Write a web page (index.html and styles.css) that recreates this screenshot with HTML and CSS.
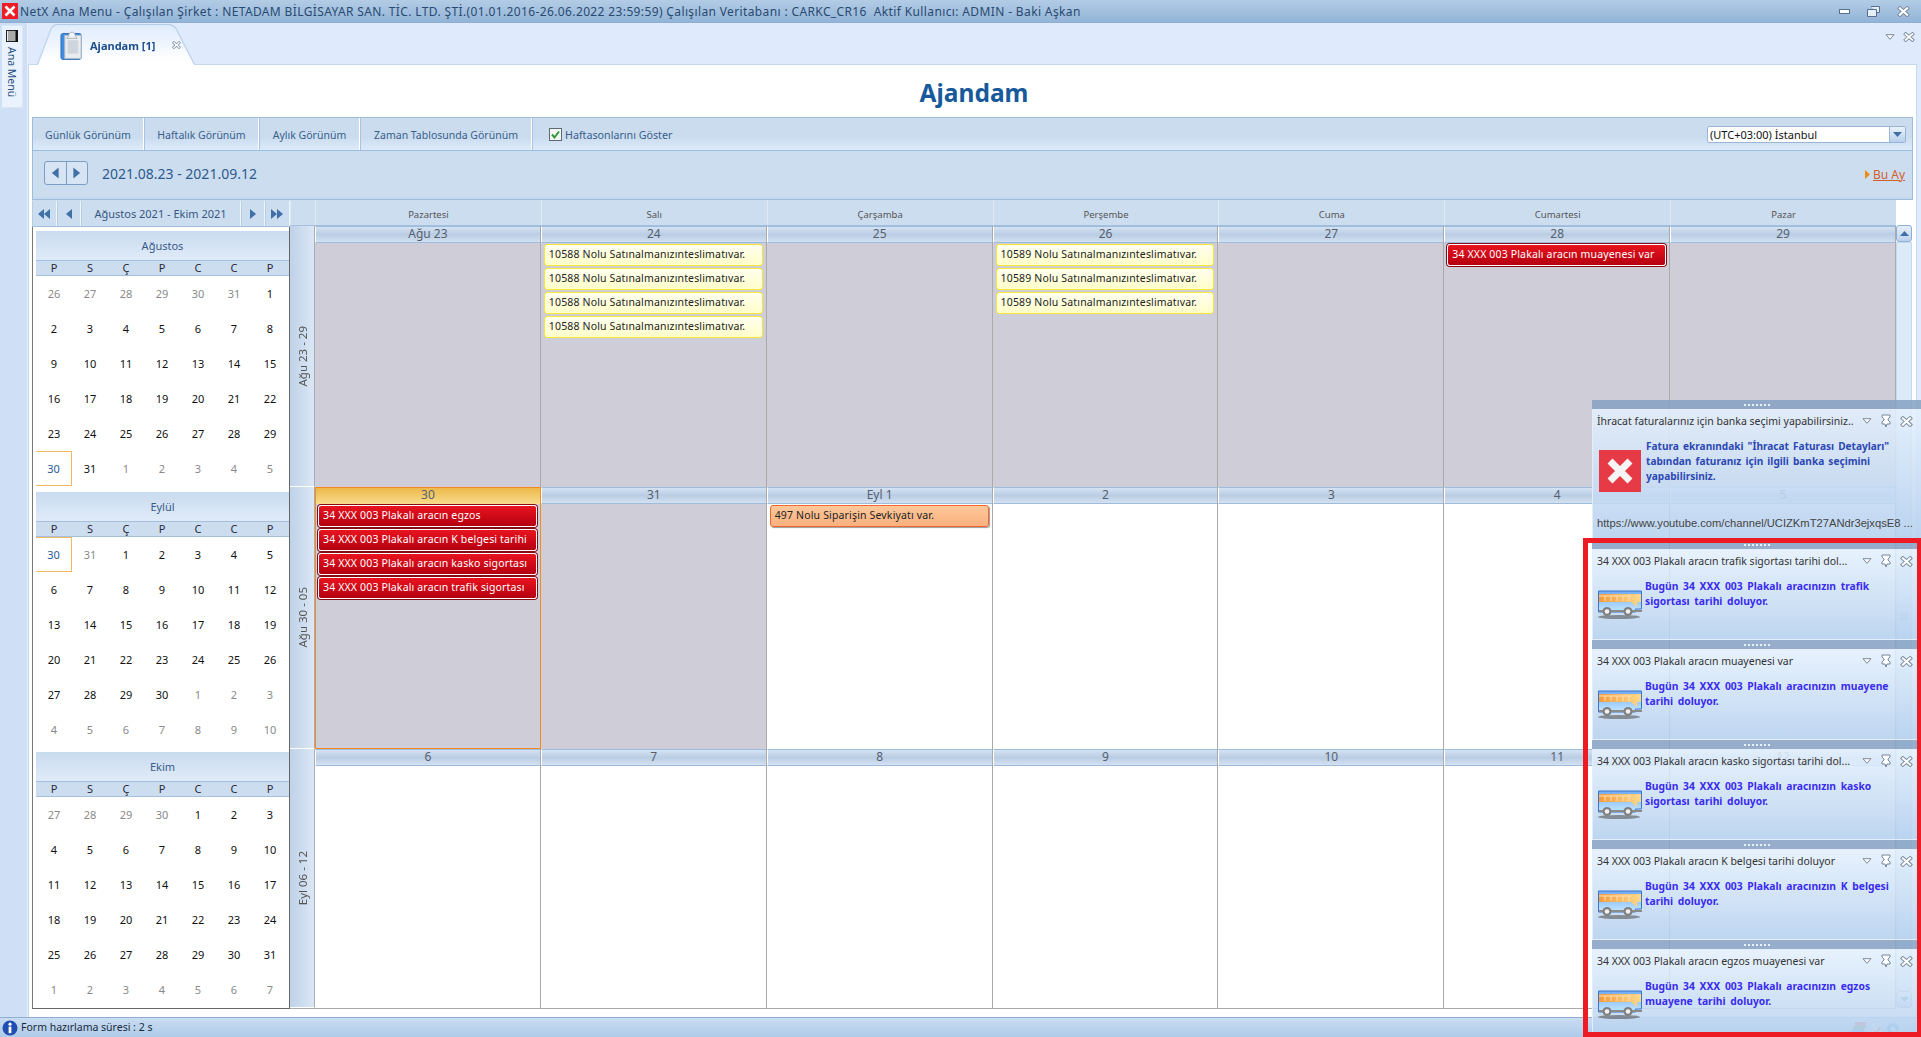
FILE: index.html
```html
<!DOCTYPE html>
<html lang="tr">
<head>
<meta charset="utf-8">
<title>NetX Ana Menu</title>
<link rel="stylesheet" href="styles.css">
</head>
<body>
<svg class="defs" width="0" height="0" aria-hidden="true">
  <defs>
    <linearGradient id="busBody" x1="0" y1="0" x2="0" y2="1"><stop offset="0" stop-color="#6faaf5"/><stop offset="1" stop-color="#c4e8ff"/></linearGradient>
    <linearGradient id="busWin" x1="0" y1="0" x2="1" y2="0"><stop offset="0" stop-color="#f59a3c"/><stop offset="1" stop-color="#fcd98a"/></linearGradient>
    <symbol id="bus" viewBox="0 0 44 30">
      <ellipse cx="21" cy="27" rx="21" ry="2" fill="#555" opacity=".6"/>
      <path d="M.5 1h43v18h-6v3H.5z" fill="url(#busBody)" stroke="#3f74c8"/>
      <path d="M1 4h42v8h-4v5l-6-5H1z" fill="url(#busWin)"/>
      <path d="M7 6v5M13 6v5M19 6v5M25 6v5M31 6v5M1 6h32" stroke="#ffe0b8" fill="none"/>
      <path d="M1 21h43" stroke="#8b8b8b" stroke-width="2"/>
      <circle cx="9" cy="21.5" r="4.5" fill="#808080"/><circle cx="9" cy="21.5" r="2.3" fill="#f2f2f2"/>
      <circle cx="30" cy="21.5" r="4.5" fill="#808080"/><circle cx="30" cy="21.5" r="2.3" fill="#f2f2f2"/>
    </symbol>
    <symbol id="xbox" viewBox="0 0 14 12"><path d="M3 2.5l8 7M11 2.5l-8 7" stroke="#76879a" stroke-width="4.2" stroke-linecap="square" fill="none"/><path d="M3 2.5l8 7M11 2.5l-8 7" stroke="#fff" stroke-width="2.2" stroke-linecap="square" fill="none"/></symbol>
    <symbol id="chev" viewBox="0 0 10 6"><path d="M1 .7h8L5 5.3z" fill="#fff" stroke="#6f7f90" stroke-width=".9"/></symbol>
    <symbol id="pin" viewBox="0 0 10 14"><path d="M1 1h8v2L7 5v1l2 2v2H6l-1 3-1-3H1V8l2-2V5L1 3z" fill="#fff" stroke="#76879a"/></symbol>
    <symbol id="lt" viewBox="0 0 10 14"><path d="M8.5 1v12L1 7z"/></symbol>
    <symbol id="rt" viewBox="0 0 10 14"><path d="M1.5 1v12L9 7z"/></symbol>
  </defs>
</svg>

<header class="titlebar">
  <svg class="appicon" viewBox="0 0 16 16"><rect width="16" height="16" fill="#ee1c25"/><path d="M3.5 3.5l9 9M12.5 3.5l-9 9" stroke="#fff" stroke-width="2.6"/></svg>
  <span class="apptitle">NetX Ana Menu - Çalışılan Şirket : NETADAM BİLGİSAYAR SAN. TİC. LTD. ŞTİ.(01.01.2016-26.06.2022 23:59:59) Çalışılan Veritabanı : CARKC_CR16&nbsp; Aktif Kullanıcı: ADMIN - Baki Aşkan</span>
  <span class="winbtns">
    <svg width="11" height="5" viewBox="0 0 11 5"><rect x=".5" y=".5" width="10" height="4" fill="#fff" stroke="#56708e"/></svg>
    <svg width="13" height="11" viewBox="0 0 13 11"><path d="M4 .5h8.5v6H10M.5 3.5h9v7h-9z" fill="#e6eef8" stroke="#56708e"/></svg>
    <svg width="13" height="11"><use href="#xbox"/></svg>
  </span>
</header>

<div class="app">
  <aside class="rail">
    <div class="railtab">
      <svg class="railicon" width="12" height="12" viewBox="0 0 12 12"><rect x=".5" y=".5" width="11" height="11" fill="#eee" stroke="#222"/><path d="M3 1v10M5 1v10M7 1v10M9 1v10" stroke="#666"/><rect x="9.5" y="0" width="2.5" height="12" fill="#111"/></svg>
      <span class="railtext">Ana Menü</span>
    </div>
  </aside>

  <main class="workspace">
    <div class="tabstrip">
      <div class="tabwrap">
        <div class="tab">
          <svg class="tabicon" width="23" height="32" viewBox="0 0 24 32"><rect x="1" y="4" width="21" height="27" rx="2" fill="#3f8de0" stroke="#2f6fc0"/><rect x="5" y="6" width="17" height="24" fill="#e9edf2" stroke="#b5bcc5"/><rect x="8" y="11" width="11" height="14" fill="#cfd5dc"/><path d="M9 7c0-6 7-6 7 0l2 2H7z" fill="#f3f5f8" stroke="#a8b0ba"/></svg>
          <span class="tablabel">Ajandam [1]</span>
          <svg class="tabclose" width="9" height="8"><use href="#xbox"/></svg>
        </div>
      </div>
      <span class="stripbtns">
        <svg width="10" height="6"><use href="#chev"/></svg>
        <svg width="12" height="10"><use href="#xbox"/></svg>
      </span>
    </div>

    <section class="panel">
      <h1 class="heading">Ajandam</h1>
      <div class="toolbar">
        <button class="tbtn tb1">Günlük Görünüm</button>
        <button class="tbtn tb2">Haftalık Görünüm</button>
        <button class="tbtn tb3">Aylık Görünüm</button>
        <button class="tbtn tb4">Zaman Tablosunda Görünüm</button>
        <label class="check"><svg width="13" height="13" viewBox="0 0 13 13"><rect x=".5" y=".5" width="12" height="12" fill="#f3f6f3" stroke="#5d6a74"/><path d="M3 6.5l2.5 3L10 3.5" fill="none" stroke="#2f9a3a" stroke-width="2"/></svg>Haftasonlarını Göster</label>
        <div class="combo"><span class="combotext">(UTC+03:00) İstanbul</span><span class="comboarrow"><svg width="9" height="5" viewBox="0 0 9 5"><path d="M0 0h9L4.5 5z" fill="#3f6fa5"/></svg></span></div>
      </div>
      <div class="navrow">
        <div class="pager">
          <span class="pg"><svg width="9" height="14"><use href="#lt" class="tri"/></svg></span>
          <span class="pg"><svg width="9" height="14"><use href="#rt" class="tri"/></svg></span>
        </div>
        <span class="daterange">2021.08.23 - 2021.09.12</span>
        <a class="today"><svg width="5" height="9" viewBox="0 0 5 9"><path d="M0 0l5 4.5L0 9z" fill="#ee8a10"/></svg><span>Bu Ay</span></a>
      </div>

      <div class="calarea">
        <div class="minipane">
          <div class="mininav">
            <span class="mn w25"><svg width="12" height="10" viewBox="0 0 12 10"><path d="M6 0v10L0 5zM12 0v10L6 5z" class="trifill"/></svg></span>
            <span class="mn w24"><svg width="6" height="10" viewBox="0 0 6 10"><path d="M6 0v10L0 5z" class="trifill"/></svg></span>
            <span class="mn mntitle">Ağustos 2021 - Ekim 2021</span>
            <span class="mn w24"><svg width="6" height="10" viewBox="0 0 6 10"><path d="M0 0v10l6-5z" class="trifill"/></svg></span>
            <span class="mn w25"><svg width="12" height="10" viewBox="0 0 12 10"><path d="M0 0v10l6-5zM6 0v10l6-5z" class="trifill"/></svg></span>
          </div>
          <div class="minibody">
            <div class="month">
              <div class="mhead">Ağustos</div>
              <div class="mdays"><b>P</b><b>S</b><b>Ç</b><b>P</b><b>C</b><b>C</b><b>P</b></div>
              <div class="mgrid">
                <i class="o">26</i><i class="o">27</i><i class="o">28</i><i class="o">29</i><i class="o">30</i><i class="o">31</i><i>1</i>
                <i>2</i><i>3</i><i>4</i><i>5</i><i>6</i><i>7</i><i>8</i>
                <i>9</i><i>10</i><i>11</i><i>12</i><i>13</i><i>14</i><i>15</i>
                <i>16</i><i>17</i><i>18</i><i>19</i><i>20</i><i>21</i><i>22</i>
                <i>23</i><i>24</i><i>25</i><i>26</i><i>27</i><i>28</i><i>29</i>
                <i class="now">30</i><i>31</i><i class="o">1</i><i class="o">2</i><i class="o">3</i><i class="o">4</i><i class="o">5</i>
              </div>
            </div>
            <div class="month">
              <div class="mhead">Eylül</div>
              <div class="mdays"><b>P</b><b>S</b><b>Ç</b><b>P</b><b>C</b><b>C</b><b>P</b></div>
              <div class="mgrid">
                <i class="now">30</i><i class="o">31</i><i>1</i><i>2</i><i>3</i><i>4</i><i>5</i>
                <i>6</i><i>7</i><i>8</i><i>9</i><i>10</i><i>11</i><i>12</i>
                <i>13</i><i>14</i><i>15</i><i>16</i><i>17</i><i>18</i><i>19</i>
                <i>20</i><i>21</i><i>22</i><i>23</i><i>24</i><i>25</i><i>26</i>
                <i>27</i><i>28</i><i>29</i><i>30</i><i class="o">1</i><i class="o">2</i><i class="o">3</i>
                <i class="o">4</i><i class="o">5</i><i class="o">6</i><i class="o">7</i><i class="o">8</i><i class="o">9</i><i class="o">10</i>
              </div>
            </div>
            <div class="month">
              <div class="mhead">Ekim</div>
              <div class="mdays"><b>P</b><b>S</b><b>Ç</b><b>P</b><b>C</b><b>C</b><b>P</b></div>
              <div class="mgrid">
                <i class="o">27</i><i class="o">28</i><i class="o">29</i><i class="o">30</i><i>1</i><i>2</i><i>3</i>
                <i>4</i><i>5</i><i>6</i><i>7</i><i>8</i><i>9</i><i>10</i>
                <i>11</i><i>12</i><i>13</i><i>14</i><i>15</i><i>16</i><i>17</i>
                <i>18</i><i>19</i><i>20</i><i>21</i><i>22</i><i>23</i><i>24</i>
                <i>25</i><i>26</i><i>27</i><i>28</i><i>29</i><i>30</i><i>31</i>
                <i class="o">1</i><i class="o">2</i><i class="o">3</i><i class="o">4</i><i class="o">5</i><i class="o">6</i><i class="o">7</i>
              </div>
            </div>
          </div>
        </div>

        <div class="sched">
          <div class="schedmain">
            <div class="weekhead">
              <span></span><span>Pazartesi</span><span>Salı</span><span>Çarşamba</span><span>Perşembe</span><span>Cuma</span><span>Cumartesi</span><span>Pazar</span>
            </div>
            <div class="week w1">
              <div class="wlabel"><span>Ağu 23 - 29</span></div>
              <div class="day off"><div class="dh">Ağu 23</div><div class="db"></div></div>
              <div class="day off"><div class="dh">24</div><div class="db">
                <div class="ev yl">10588 Nolu Satınalmanızınteslimatıvar.</div>
                <div class="ev yl">10588 Nolu Satınalmanızınteslimatıvar.</div>
                <div class="ev yl">10588 Nolu Satınalmanızınteslimatıvar.</div>
                <div class="ev yl">10588 Nolu Satınalmanızınteslimatıvar.</div>
              </div></div>
              <div class="day off"><div class="dh">25</div><div class="db"></div></div>
              <div class="day off"><div class="dh">26</div><div class="db">
                <div class="ev yl">10589 Nolu Satınalmanızınteslimatıvar.</div>
                <div class="ev yl">10589 Nolu Satınalmanızınteslimatıvar.</div>
                <div class="ev yl">10589 Nolu Satınalmanızınteslimatıvar.</div>
              </div></div>
              <div class="day off"><div class="dh">27</div><div class="db"></div></div>
              <div class="day off"><div class="dh">28</div><div class="db"><div class="ev rd">34 XXX 003 Plakalı aracın muayenesi var</div></div></div>
              <div class="day off"><div class="dh">29</div><div class="db"></div></div>
            </div>
            <div class="week w2">
              <div class="wlabel"><span>Ağu 30 - 05</span></div>
              <div class="day off cur"><div class="dh">30</div><div class="db">
                <div class="ev rd">34 XXX 003 Plakalı aracın egzos</div>
                <div class="ev rd">34 XXX 003 Plakalı aracın K belgesi tarihi</div>
                <div class="ev rd">34 XXX 003 Plakalı aracın kasko sigortası</div>
                <div class="ev rd">34 XXX 003 Plakalı aracın trafik sigortası</div>
              </div></div>
              <div class="day off"><div class="dh">31</div><div class="db"></div></div>
              <div class="day"><div class="dh">Eyl 1</div><div class="db"><div class="ev pc">497 Nolu Siparişin Sevkiyatı var.</div></div></div>
              <div class="day"><div class="dh">2</div><div class="db"></div></div>
              <div class="day"><div class="dh">3</div><div class="db"></div></div>
              <div class="day"><div class="dh">4</div><div class="db"></div></div>
              <div class="day"><div class="dh">5</div><div class="db"></div></div>
            </div>
            <div class="week w3">
              <div class="wlabel"><span>Eyl 06 - 12</span></div>
              <div class="day"><div class="dh">6</div><div class="db"></div></div>
              <div class="day"><div class="dh">7</div><div class="db"></div></div>
              <div class="day"><div class="dh">8</div><div class="db"></div></div>
              <div class="day"><div class="dh">9</div><div class="db"></div></div>
              <div class="day"><div class="dh">10</div><div class="db"></div></div>
              <div class="day"><div class="dh">11</div><div class="db"></div></div>
              <div class="day"><div class="dh">12</div><div class="db"></div></div>
            </div>
          </div>
          <div class="vscroll">
            <span class="sbtn up"><svg width="9" height="5" viewBox="0 0 9 5"><path d="M4.5 0L9 5H0z" fill="#3f6fa5"/></svg></span>
            <span class="thumb"><svg width="10" height="8" viewBox="0 0 10 8"><path d="M1 .5h8M1 2.5h8M1 4.5h8M1 6.5h8" stroke="#9fb6cf"/></svg></span>
            <span class="sbtn down"><svg width="9" height="5" viewBox="0 0 9 5"><path d="M0 0h9L4.5 5z" fill="#3f6fa5"/></svg></span>
          </div>
        </div>
      </div>
    </section>
  </main>
</div>

<footer class="statusbar">
  <svg class="infoicon" width="16" height="16" viewBox="0 0 16 16"><circle cx="8" cy="8" r="7.5" fill="#1f4fb0"/><rect x="6.6" y="6.6" width="2.8" height="6.6" fill="#fff"/><circle cx="8" cy="4.2" r="1.6" fill="#fff"/></svg>
  <span>Form hazırlama süresi : 2 s</span>
  <span class="tray">
    <svg width="16" height="15" viewBox="0 0 16 15"><rect x="4" y="0" width="11" height="6" fill="#d8584a"/><rect x="2" y="4" width="11" height="6" fill="#4aa860"/><rect x="0" y="8" width="11" height="7" fill="#5a8fd8"/></svg>
    <svg width="11" height="15" viewBox="0 0 11 15"><path d="M1 1h9v13H1z" fill="#e8eef5"/><path d="M3 9l2 3 4-7" stroke="#d88a20" stroke-width="2" fill="none"/></svg>
    <svg width="15" height="15" viewBox="0 0 15 15"><circle cx="7" cy="7" r="6" fill="#4f9bd8"/><circle cx="7" cy="7" r="2.5" fill="#dcebf8"/><rect x="8" y="9" width="6" height="5" fill="#e0c040"/></svg>
  </span>
</footer>

<div class="toasts">
  <article class="toast first">
    <div class="grip"><span></span></div>
    <div class="tbody">
      <div class="thead"><span class="ttl">İhracat faturalarınız için banka seçimi yapabilirsiniz..</span><span class="ticons"><svg class="ic" width="10" height="6"><use href="#chev"/></svg><svg class="ic" width="10" height="14"><use href="#pin"/></svg><svg class="ic" width="13" height="11"><use href="#xbox"/></svg></span></div>
      <div class="tcontent">
        <svg class="errbox" width="42" height="42" viewBox="0 0 42 42"><rect width="42" height="42" fill="#e63a46"/><path d="M11 11l20 20M31 11L11 31" stroke="#f5f5f5" stroke-width="7"/></svg>
        <p class="msg dark">Fatura ekranındaki "İhracat Faturası Detayları" tabından faturanız için ilgili banka seçimini yapabilirsiniz.</p>
      </div>
      <div class="turl">https://www.youtube.com/channel/UCIZKmT27ANdr3ejxqsE8&nbsp;...</div>
    </div>
  </article>
  <article class="toast">
    <div class="grip"><span></span></div>
    <div class="tbody">
      <div class="thead"><span class="ttl">34 XXX 003 Plakalı aracın trafik sigortası tarihi dol...</span><span class="ticons"><svg class="ic" width="10" height="6"><use href="#chev"/></svg><svg class="ic" width="10" height="14"><use href="#pin"/></svg><svg class="ic" width="13" height="11"><use href="#xbox"/></svg></span></div>
      <div class="tcontent"><svg class="busicon" width="44" height="30"><use href="#bus"/></svg><p class="msg">Bugün 34 XXX 003 Plakalı aracınızın trafik sigortası tarihi doluyor.</p></div>
    </div>
  </article>
  <article class="toast">
    <div class="grip"><span></span></div>
    <div class="tbody">
      <div class="thead"><span class="ttl">34 XXX 003 Plakalı aracın muayenesi var</span><span class="ticons"><svg class="ic" width="10" height="6"><use href="#chev"/></svg><svg class="ic" width="10" height="14"><use href="#pin"/></svg><svg class="ic" width="13" height="11"><use href="#xbox"/></svg></span></div>
      <div class="tcontent"><svg class="busicon" width="44" height="30"><use href="#bus"/></svg><p class="msg">Bugün 34 XXX 003 Plakalı aracınızın muayene tarihi doluyor.</p></div>
    </div>
  </article>
  <article class="toast">
    <div class="grip"><span></span></div>
    <div class="tbody">
      <div class="thead"><span class="ttl">34 XXX 003 Plakalı aracın kasko sigortası tarihi dol...</span><span class="ticons"><svg class="ic" width="10" height="6"><use href="#chev"/></svg><svg class="ic" width="10" height="14"><use href="#pin"/></svg><svg class="ic" width="13" height="11"><use href="#xbox"/></svg></span></div>
      <div class="tcontent"><svg class="busicon" width="44" height="30"><use href="#bus"/></svg><p class="msg">Bugün 34 XXX 003 Plakalı aracınızın kasko sigortası tarihi doluyor.</p></div>
    </div>
  </article>
  <article class="toast">
    <div class="grip"><span></span></div>
    <div class="tbody">
      <div class="thead"><span class="ttl">34 XXX 003 Plakalı aracın K belgesi tarihi doluyor</span><span class="ticons"><svg class="ic" width="10" height="6"><use href="#chev"/></svg><svg class="ic" width="10" height="14"><use href="#pin"/></svg><svg class="ic" width="13" height="11"><use href="#xbox"/></svg></span></div>
      <div class="tcontent"><svg class="busicon" width="44" height="30"><use href="#bus"/></svg><p class="msg">Bugün 34 XXX 003 Plakalı aracınızın K belgesi tarihi doluyor.</p></div>
    </div>
  </article>
  <article class="toast">
    <div class="grip"><span></span></div>
    <div class="tbody">
      <div class="thead"><span class="ttl">34 XXX 003 Plakalı aracın egzos muayenesi var</span><span class="ticons"><svg class="ic" width="10" height="6"><use href="#chev"/></svg><svg class="ic" width="10" height="14"><use href="#pin"/></svg><svg class="ic" width="13" height="11"><use href="#xbox"/></svg></span></div>
      <div class="tcontent"><svg class="busicon" width="44" height="30"><use href="#bus"/></svg><p class="msg">Bugün 34 XXX 003 Plakalı aracınızın egzos muayene tarihi doluyor.</p></div>
    </div>
  </article>
</div>
<div class="redframe"></div>
</body>
</html>
```

FILE: styles.css
```css
* { box-sizing: border-box; }
html, body { margin: 0; height: 100%; }
body {
  width: 1921px; height: 1037px; overflow: hidden; position: relative;
  display: flex; flex-direction: column;
  font-family: "Noto Sans", "Open Sans", sans-serif; font-size: 11px; color: #222;
  background: #dfebfd;
}
.defs { position: absolute; }

.titlebar {
  height: 23px; flex: none; display: flex; align-items: center; padding: 0 11px 0 2px;
  background: linear-gradient(#b3cce5, #93b4d8); border-bottom: 1px solid #8eaed2;
}
.appicon { width: 16px; height: 16px; flex: none; }
.apptitle { margin-left: 2px; font-size: 12px; letter-spacing: .37px; color: #294a70; white-space: nowrap; }
.winbtns { margin-left: auto; display: flex; align-items: center; gap: 17px; }

.app { flex: 1; display: flex; min-height: 0; }
.rail { width: 28px; flex: none; background: #cfe0f6; padding: 2px 0 0 2px; border-right: 1px solid #e6effb; }
.railtab {
  width: 21px; height: 83px; background: #eaf2fd; border: 1px solid #dbe7f7; border-left: 0;
  display: flex; flex-direction: column; align-items: center; padding-top: 4px; gap: 5px;
}
.railtext { writing-mode: vertical-rl; font-size: 10.5px; color: #274f80; line-height: 1; }

.workspace { flex: 1; display: flex; flex-direction: column; min-width: 0; padding-right: 4px; }
.tabstrip { height: 41px; flex: none; display: flex; align-items: flex-end; padding-left: 10px; position: relative; background: #dfebfd; }
.tabwrap { filter: drop-shadow(0 -1px 0 #b4cbe6) drop-shadow(1px 0 0 #c4d8ee) drop-shadow(-1px 0 0 #c4d8ee); margin-bottom: -1px; position: relative; z-index: 1; }
.tab {
  width: 156px; height: 40px; display: flex; align-items: center; gap: 7px; padding-left: 22px;
  background: linear-gradient(#dfebfd, #ffffff 90%);
  clip-path: polygon(0 100%, 14px 3px, 18px 0, 132px 0, 137px 3px, 156px 100%);
}
.tabicon { flex: none; }
.tablabel { font-size: 11px; font-weight: 700; color: #1d4f8c; white-space: nowrap; }
.tabclose { margin-left: 10px; flex: none; }
.stripbtns { position: absolute; right: 2px; top: 9px; display: flex; align-items: center; gap: 8px; }

.panel {
  flex: 1; min-height: 0; display: flex; flex-direction: column; padding: 0 0 3px 3px;
  background: #fff; border-top: 1px solid #c4d8ee; border-left: 1px solid #c4d8ee; border-right: 1px solid #c4d8ee;
}
.heading { height: 52px; margin: 0; padding-top: 10px; text-align: center; font-size: 24.5px; line-height: 36px; font-weight: 700; color: #17599b; }
.toolbar {
  height: 34px; flex: none; margin-right: 3px; display: flex; align-items: stretch; font-size: 10.5px;
  background: linear-gradient(#cbdcef 60%, #dcebfb); border: 1px solid #9dbcdc;
}
.tbtn {
  border: 0; border-right: 1px solid #fff; box-shadow: 1px 0 0 #a9c4e1; margin-right: 1px; padding: 1px 0 0;
  background: transparent; font: inherit; color: #385f8c; white-space: nowrap;
}
.tb1 { width: 111px; } .tb2 { width: 114px; } .tb3 { width: 100px; } .tb4 { width: 171px; }
.check { display: flex; align-items: center; gap: 3px; margin-left: 16px; padding-top: 1px; font-size: 10.7px; color: #385f8c; white-space: nowrap; }
.combo {
  margin: 8px 6px 7px auto; width: 199px; display: flex; background: #fff; border: 1px solid #97b6d8; border-radius: 2px;
  font-size: 11px; color: #111; line-height: 15px;
}
.combotext { flex: 1; padding-left: 2px; white-space: nowrap; }
.comboarrow { width: 16px; display: flex; align-items: center; justify-content: center; background: linear-gradient(#eaf2fb, #b7d0ec); border-left: 1px solid #97b6d8; }

.navrow {
  height: 49px; flex: none; margin-right: 3px; display: flex; align-items: center; padding: 0 7px 2px 11px;
  background: #ccddf0; border: 1px solid #9dbcdc; border-top: 0; box-shadow: inset 0 -2px 0 #c5d8ec;
}
.pager { display: flex; width: 44px; height: 24px; margin-top: -2px; border: 1px solid #7b9ec5; border-radius: 3px; background: #d6e4f4; }
.pg { flex: 1; display: flex; align-items: center; justify-content: center; }
.pg + .pg { border-left: 1px solid #7b9ec5; }
.tri { fill: #3f70a8; }
.trifill { fill: #3f70a8; }
.daterange { margin-left: 14px; font-size: 14px; color: #2c5a8e; margin-top: -2px; }
.today { margin-left: auto; display: flex; align-items: center; gap: 3px; font-size: 12px; color: #d2602c; }
.today span { text-decoration: underline; }

.calarea { flex: 1; min-height: 0; display: flex; margin-right: 3px; height: 809px; }
.minipane { width: 258px; flex: none; display: flex; flex-direction: column; }
.mininav { height: 27px; flex: none; display: flex; background: #ccddf0; border-bottom: 1px solid #a4c0de; padding-top: 1px; }
.mn { display: flex; align-items: center; justify-content: center; border-right: 1px solid #eef4fb; box-shadow: 1px 0 0 #b7cde5 inset; }
.w25 { width: 25px; flex: none; } .w24 { width: 24px; flex: none; }
.mntitle { flex: 1; color: #37587f; font-size: 11px; white-space: nowrap; }
.minibody { height: 782px; padding: 4px 0 0 3px; background: #fff; border-left: 1px solid #777; border-right: 1px solid #666; border-bottom: 1px solid #666; display: flex; flex-direction: column; gap: 5.5px; }
.month { height: 255px; flex: none; }
.mhead { height: 30px; display: flex; align-items: center; justify-content: center; font-size: 11px; color: #3a5a8c; background: linear-gradient(#c9dbef, #e0ebf8); border-bottom: 1px solid #a4c0de; }
.mdays { height: 15px; display: grid; grid-template-columns: repeat(7, 36px); background: #ccddf0; border-bottom: 1px solid #a4c0de; text-align: center; line-height: 14px; }
.mdays b { font-weight: 400; color: #2a2a3a; }
.mgrid { display: grid; grid-template-columns: repeat(7, 36px); grid-auto-rows: 35px; }
.mgrid i { font-style: normal; color: #111; display: flex; align-items: center; justify-content: center; }
.mgrid i.o { color: #8a8a8a; }
.mgrid i.now { color: #2c5a9a; border: 1px solid #f4b860; border-left: 0; }

.sched { flex: 1; min-width: 0; display: flex; background: #fff; }
.schedmain { flex: 1; min-width: 0; display: flex; flex-direction: column; }
.weekhead { height: 26px; display: grid; grid-template-columns: 25px repeat(7, 1fr); background: #ccddf0; border-bottom: 1px solid #a4c0de; }
.weekhead span { display: flex; align-items: center; justify-content: center; padding-top: 3px; font-size: 9.5px; color: #555; border-left: 1px solid #dfe9f6; }
.week { display: grid; grid-template-columns: 25px repeat(7, 1fr); }
.w1 { height: 261px; } .w2 { height: 262px; } .w3 { height: 260px; border-bottom: 1px solid #aaa; }
.wlabel { display: flex; align-items: center; justify-content: center; background: linear-gradient(90deg, #bfd2e8, #dbe7f5); border-right: 1px solid #aab; border-bottom: 1px solid #fff; }
.wlabel span { writing-mode: vertical-rl; transform: rotate(180deg); font-size: 11.5px; color: #555; }
.day { display: flex; flex-direction: column; border-right: 1px solid #aaa; min-width: 0; }
.dh { height: 17px; flex: none; text-align: center; font-size: 12px; line-height: 14px; color: #56606e; background: linear-gradient(#d5e3f3, #b9cde4 50%, #d3e1f1); border-left: 1px solid #fff; border-top: 1px solid #9dbcdc; border-bottom: 1px solid #9dbcdc; }
.db { flex: 1; padding: 1px 3px; display: flex; flex-direction: column; gap: 2px; }
.off .db { background: #cfcdd7; }
.cur { border-left: 1px solid #f28a1e; border-right: 1px solid #f28a1e; border-bottom: 1px solid #f28a1e; }
.cur .dh { background: linear-gradient(#ecb84a, #f8dc8c); border-left: 0; border-top-color: #f28a1e; border-bottom: 0; }
.cur .db { padding-left: 2px; }
.ev { height: 22px; flex: none; line-height: 19px; padding-left: 4px; border-radius: 3px; white-space: nowrap; overflow: hidden; font-size: 10.5px; letter-spacing: .16px; }
.yl { background: linear-gradient(#fffff0, #ffffc8); border: 1px solid #f4e838; color: #222; }
.rd { background: linear-gradient(#e8141f, #b50010); border: 1px solid #fff; box-shadow: 0 0 0 1px #8a0a14; color: #fff; }
.pc { background: linear-gradient(#fdc89a, #fbb07e); border: 1px solid #f06a30; color: #222; box-shadow: 1px 1px 1px #999; }

.vscroll { width: 17px; flex: none; display: flex; flex-direction: column; padding: 25px 1px 0 0; }
.sbtn { height: 17px; flex: none; display: flex; align-items: center; justify-content: center; border: 1px solid #8cafd5; border-radius: 3px; background: linear-gradient(#e6effa, #bcd3ec); }
.thumb { height: 749px; flex: none; display: flex; align-items: center; justify-content: center; background: #dceafa; border: 1px solid #c6d8ec; }

.statusbar {
  height: 20px; flex: none; display: flex; align-items: center; gap: 3px; padding: 0 20px 2px 2px;
  background: linear-gradient(#c9dcf2, #aecbe9); border-top: 1px solid #8eaed2; font-size: 10.5px; color: #1a2a3a;
}
.infoicon { margin-bottom: -3px; }
.tray { margin-left: auto; display: flex; gap: 4px; align-self: flex-end; margin-bottom: -2px; }

.toasts { position: absolute; left: 1592px; top: 400px; width: 329px; display: flex; flex-direction: column; }
.toast { height: 100px; flex: none; display: flex; flex-direction: column; }
.toast.first { height: 140px; }
.grip { height: 9px; flex: none; display: flex; align-items: center; justify-content: center; background: rgba(136, 163, 196, .88); }
.grip span { width: 26px; height: 2px; background: repeating-linear-gradient(90deg, #e8f0fa 0 2px, transparent 2px 4px); }
.tbody {
  flex: 1; min-height: 0; display: flex; flex-direction: column; padding: 0 0 0 4px;
  background: linear-gradient(rgba(228, 240, 253, .88), rgba(181, 208, 238, .88));
  border: 1px solid #e4eefb; border-right: 0;
}
.thead { height: 22px; flex: none; display: flex; align-items: center; }
.ttl { flex: 1; font-size: 10.5px; color: #333; white-space: nowrap; overflow: hidden; }
.ticons { display: flex; align-items: center; width: 59px; flex: none; gap: 9px; padding-right: 5px; }
.tcontent { display: flex; align-items: flex-start; margin-top: 7px; }
.errbox { flex: none; margin: 11px 5px 0 2px; }
.busicon { flex: none; margin: 11px 3px 0 1px; }
.msg { margin: 0; width: 268px; font-size: 10.3px; font-weight: 700; line-height: 15px; color: #3a2cf0; word-spacing: 2px; }
.msg.dark { color: #2c48b4; font-size: 10.1px; word-spacing: 1.5px; }
.turl { margin-top: 25px; font-family: "Liberation Sans", sans-serif; font-size: 11.2px; color: #444; white-space: nowrap; }
.redframe { position: absolute; left: 1583px; top: 538px; width: 338px; height: 499px; border: 5px solid #ed1c24; border-right-width: 4px; pointer-events: none; }
```
